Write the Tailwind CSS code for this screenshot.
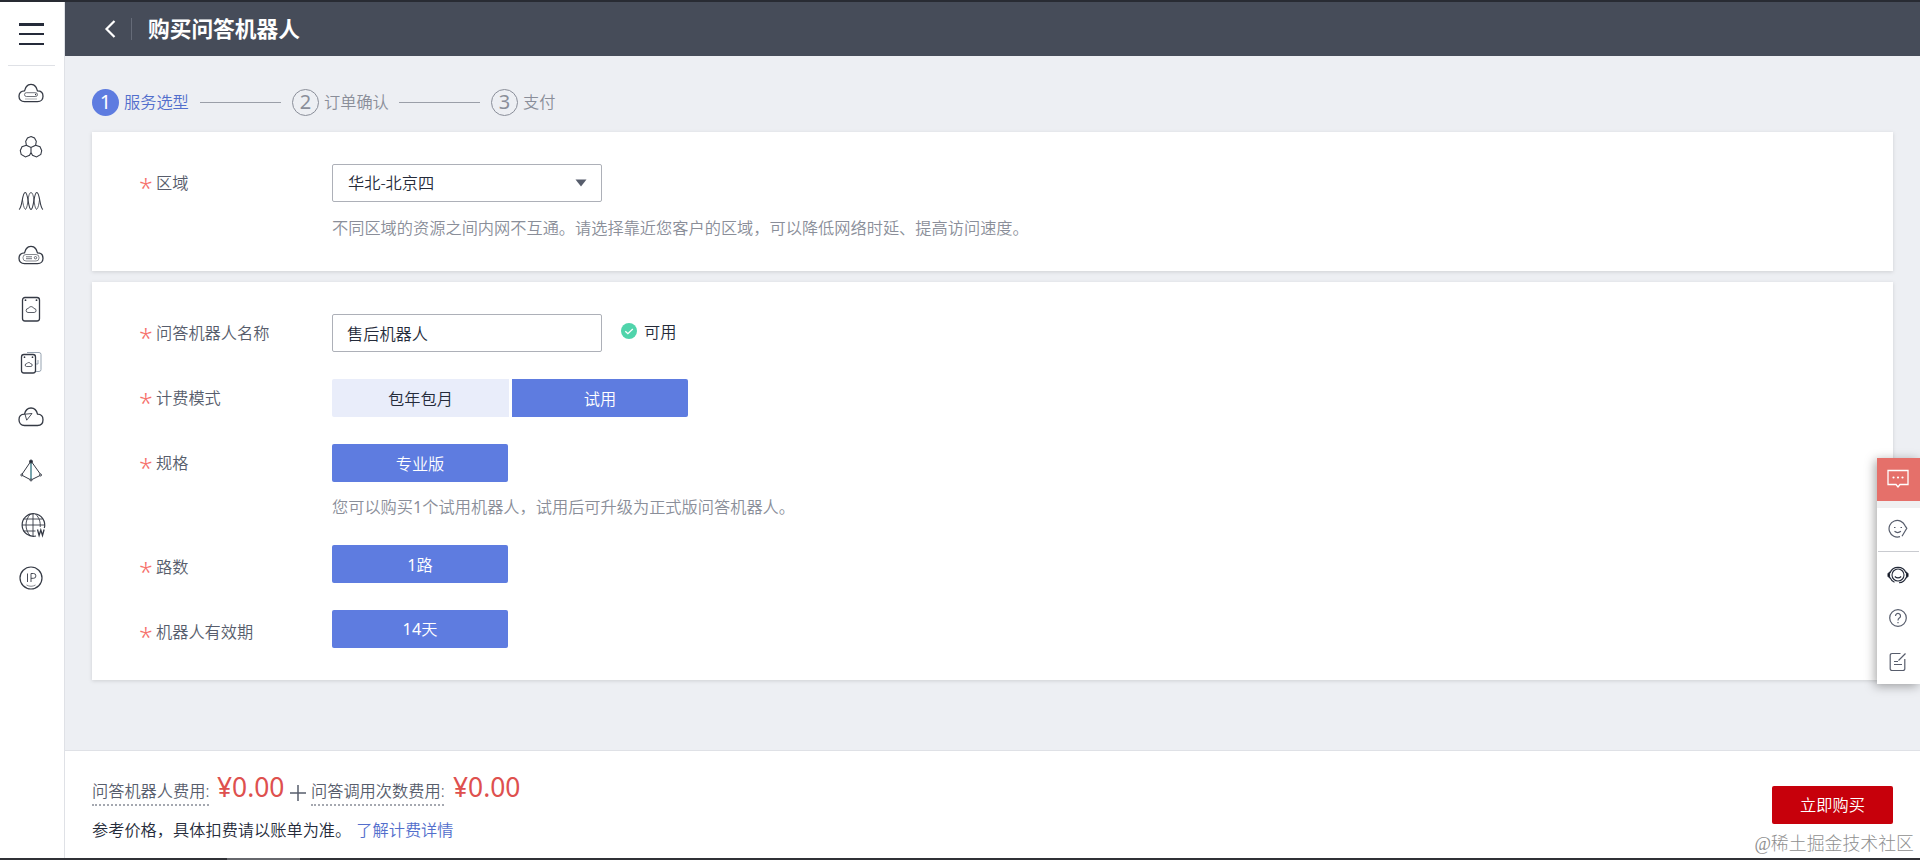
<!DOCTYPE html>
<html lang="zh-CN">
<head>
<meta charset="utf-8">
<title>购买问答机器人</title>
<script src="https://cdn.jsdelivr.net/npm/@tailwindcss/browser@4"></script>
</head>
<body class="relative flex h-[860px] w-[1920px] flex-col overflow-hidden border-t-2 border-[#282b33] bg-[#edeff3] font-['Noto_Sans','Noto_Sans_CJK_SC',sans-serif] text-[16.22px] leading-6 font-[350] text-[#252b3a]">
<div class="flex min-h-0 flex-1">
  <nav class="flex w-[65px] shrink-0 flex-col items-center border-r border-[#dfe1e6] bg-white text-[#353a45]">
    <div class="mr-[2px] flex h-[64px] w-[47px] items-center justify-center border-b border-[#dfe1e6] pt-px">
      <div class="flex h-[22px] w-[25px] flex-col justify-between"><i class="h-[2.5px] bg-[#252b3a]"></i><i class="h-[2.5px] bg-[#252b3a]"></i><i class="h-[2.5px] bg-[#252b3a]"></i></div>
    </div>
    <div class="flex w-[30px] flex-col">
      <div class="flex h-[54px] items-center"><svg width="28" height="28" viewBox="0 0 28 28" fill="none" stroke="currentColor" stroke-width="1.3"><path d="M7.500 22.700C4 22.700 2 20.200 2 17.200C2 13.800 4.300 11.900 7.500 11.900C8.300 10.500 8.200 9 9.500 7.500C11.500 4.700 16.500 4.700 18.500 7.500C19.800 9 19.700 10.500 20.500 11.900C23.700 11.900 26 13.800 26 17.200C26 20.200 24 22.700 20.500 22.700Z"/><rect x="7.500" y="13.700" width="13" height="3.800" rx="1.900" stroke-width=".7"/><path d="M18 15.500h1.200"/><path d="M8 20h12" stroke-width=".4"/></svg></div>
      <div class="flex h-[54px] items-center"><svg width="28" height="28" viewBox="0 0 28 28" fill="none" stroke="currentColor" stroke-width="1.100"><path d="M14 3.500 17.500 5 19.300 8.300 18.600 12.300 14 14.500 9.400 12.300 8.700 8.300 10.500 5Z"/><path d="M9.400 12.300 5 13.800 3.300 17.500 4.200 21.500 8.500 23.900 12.500 22.300 14 19.500V14.500M18.600 12.300 23 13.800 24.700 17.500 23.800 21.500 19.500 23.900 15.500 22.300 14 19.500"/></svg></div>
      <div class="flex h-[54px] items-center"><svg width="28" height="28" viewBox="0 0 28 28" fill="none" stroke="currentColor" stroke-width="1.100"><path d="M2 22.500C5.500 21 5 5.500 8.200 5.500S11 22.500 14 22.500 16.600 5.500 19.800 5.500 22.500 21 26 22.500"/><path d="M14 5.500C10.500 5.500 11.500 20 8.500 22.500C6.500 21 6 16 5.500 13M14 5.500C17.500 5.500 16.500 20 19.500 22.500C21.500 21 22 16 22.500 13" stroke-width=".8"/></svg></div>
      <div class="flex h-[54px] items-center"><svg width="28" height="28" viewBox="0 0 28 28" fill="none" stroke="currentColor" stroke-width="1.300"><path d="M7.500 22.700C4 22.700 2 20.200 2 17.200C2 13.800 4.300 11.900 7.500 11.900C8.300 10.500 8.200 9 9.500 7.500C11.500 4.700 16.500 4.700 18.500 7.500C19.800 9 19.700 10.500 20.500 11.900C23.700 11.900 26 13.800 26 17.200C26 20.200 24 22.700 20.500 22.700Z"/><rect x="6" y="13.500" width="16" height="6.500" rx="3" stroke-width=".6"/><path d="M9 15.800h6M9 17.700h6" stroke-width=".7"/><circle cx="18.500" cy="16.700" r="1.200" stroke-width=".7"/></svg></div>
      <div class="flex h-[54px] items-center"><svg width="28" height="28" viewBox="0 0 28 28" fill="none" stroke="currentColor" stroke-width="1.300"><rect x="5.500" y="2.500" width="17" height="23.500" rx="2.500"/><path d="M8.500 5.200h.01M19.500 5.200h.01" stroke-width="1.800" stroke-linecap="round"/><path d="M11 17.500a2 2 0 0 1 .3-4 3 3 0 0 1 5.600 0 2 2 0 0 1 .3 4Z" stroke-width=".8"/></svg></div>
      <div class="flex h-[54px] items-center"><svg width="28" height="28" viewBox="0 0 28 28" fill="none" stroke="currentColor" stroke-width="1.300"><rect x="4.500" y="5.500" width="14" height="18.500" rx="2.500"/><path d="M7.500 8.200h.01M15.500 8.200h.01" stroke-width="1.700" stroke-linecap="round"/><path d="M9.500 17.500a1.400 1.400 0 0 1 .2-2.800 2.300 2.300 0 0 1 4 0 1.400 1.400 0 0 1 .2 2.800Z" stroke-width=".8"/><path d="M10 3.500h12a2 2 0 0 1 2 2v15a2 2 0 0 1-2 2h-3M21 11v4h-2" stroke="#8b98a8" stroke-width=".9"/></svg></div>
      <div class="flex h-[54px] items-center"><svg width="28" height="28" viewBox="0 0 28 28" fill="none" stroke="currentColor" stroke-width="1.300"><path d="M7.500 22.500C4 22.500 2 20 2 16.800C2 13.500 4.300 11.300 7.500 11.200C8.300 7.500 10.500 5 14 5S19.700 7.500 20.500 11.200C23.700 11.300 26 13.500 26 16.800C26 20 24 22.500 20.500 22.500Z"/><path d="M8 11.200 15 10.500 9.700 17.200Z" stroke-width=".9"/></svg></div>
      <div class="flex h-[54px] items-center"><svg width="28" height="28" viewBox="0 0 28 28" fill="none" stroke="currentColor" stroke-width="1"><path d="M14 4 4.500 18 14 23 24 18Z"/><path d="M14 4v19" stroke="#3f7f8b" stroke-width="1.400"/><circle cx="14" cy="4.500" r="1.500" fill="#252b3a"/><circle cx="4.800" cy="18" r="1" fill="#fff"/><circle cx="23.500" cy="18" r="1" fill="#fff"/><circle cx="14" cy="23" r="1" fill="#fff"/></svg></div>
      <div class="flex h-[54px] items-center pl-[2px]"><svg width="28" height="28" viewBox="0 0 28 28" fill="none" stroke="currentColor" stroke-width="1.200"><path d="M25.300 17A11.300 11.300 0 1 0 17 25"/><path d="M14 2.500V25M3 14h22.500M4.500 8h19M4.500 20h12M11.500 3C5.500 9 5.500 19 11.500 25M16.500 3c4 4 5 8 4.700 13" stroke-width=".9"/><path d="m18.500 18.500 1.600 6 1.700-5.500 1.700 5.500 1.600-6" stroke-width="1.300"/></svg></div>
      <div class="flex h-[54px] items-center"><svg class="mb-[2px]" width="28" height="28" viewBox="0 0 28 28" fill="none" stroke="currentColor" stroke-width="1.200"><circle cx="14" cy="14" r="11"/><path d="M10.500 9.500v8.500M14 18V9.500h2.500a2.400 2.400 0 0 1 0 4.800H14" stroke-width=".9"/><path d="M9.500 21c3 1.700 6 1.700 9 0" stroke-width=".6"/></svg></div>
    </div>
  </nav>
  <div class="flex min-w-0 flex-1 flex-col">
    <header class="flex h-[54px] shrink-0 items-center bg-[#464c59] pl-[38px] text-white">
      <svg width="14" height="18" viewBox="0 0 14 18" fill="none" stroke="currentColor" stroke-width="2.200"><path d="M11.500 1 3.500 9l8 8"/></svg>
      <i class="ml-[14px] h-[22px] w-px bg-[#656b78]"></i>
      <h1 class="ml-[16px] text-[21.7px] leading-8 font-bold">购买问答机器人</h1>
    </header>
    <main class="flex flex-1 flex-col pr-[27px] pl-[27px]">
      <div class="mt-[33px] flex h-[27px] items-center text-[#8a8e99]">
        <span class="flex size-[27px] items-center justify-center rounded-full bg-[#5e7ce0] pb-px text-[20px] font-normal text-white">1</span><span class="mb-[2px] ml-[5px] w-[65px] whitespace-nowrap text-[#526ecc]">服务选型</span>
        <i class="ml-[11px] h-px w-[81px] bg-[#9b9fa8]"></i>
        <span class="ml-[11px] flex size-[27px] items-center justify-center rounded-full border border-[#8a8e99] pb-px text-[20px] font-normal">2</span><span class="mb-[2px] ml-[5px] w-[65px] whitespace-nowrap">订单确认</span>
        <i class="ml-[10px] h-px w-[81px] bg-[#9b9fa8]"></i>
        <span class="ml-[11px] flex size-[27px] items-center justify-center rounded-full border border-[#8a8e99] pb-px text-[20px] font-normal">3</span><span class="mb-[2px] ml-[5px]">支付</span>
      </div>
      <section class="mt-4 h-[139px] bg-white pt-8 pl-[47px] shadow-[0_1px_4px_rgba(0,0,0,0.13)]">
        <div class="flex h-[38px] items-center">
          <label class="flex w-[193px] items-center text-[#575d6c]"><span class="w-[17px] pt-[8px] text-[25px] text-[#f66f6a]">*</span>区域</label>
          <div class="flex h-[38px] w-[270px] items-center justify-between rounded-[2px] border border-[#adb0b8] pr-[14px] pl-[15px]"><span>华北-北京四</span><svg width="12" height="8" viewBox="0 0 12 8"><path d="M.5.500h11L6 7.500Z" fill="#575d6c"/></svg></div>
        </div>
        <p class="mt-[14px] ml-[193px] text-[#8a8e99]">不同区域的资源之间内网不互通。请选择靠近您客户的区域，可以降低网络时延、提高访问速度。</p>
      </section>
      <section class="mt-[11px] h-[398px] bg-white pt-8 pl-[47px] shadow-[0_1px_4px_rgba(0,0,0,0.13)]">
        <div class="flex h-[38px] items-center">
          <label class="flex w-[193px] items-center text-[#575d6c]"><span class="w-[17px] pt-[8px] text-[25px] text-[#f66f6a]">*</span>问答机器人名称</label>
          <div class="flex h-[38px] w-[270px] items-center rounded-[2px] border border-[#adb0b8] pl-[14px]"><span class="pt-px">售后机器人</span></div>
          <svg class="mb-1 ml-[19px]" width="16" height="16" viewBox="0 0 16 16"><circle cx="8" cy="8" r="8" fill="#50d4ab"/><path d="m4.300 8.200 2.600 2.500 4.900-4.700" fill="none" stroke="#fff" stroke-width="1.300"/></svg><span class="mb-[3px] ml-[7px]">可用</span>
        </div>
        <div class="mt-[27px] flex h-[38px] items-center">
          <label class="flex w-[193px] items-center text-[#575d6c]"><span class="w-[17px] pt-[8px] text-[25px] text-[#f66f6a]">*</span>计费模式</label>
          <div class="flex h-[38px] w-[177px] items-center justify-center rounded-l-[2px] bg-[#e9edfa] pt-px">包年包月</div>
          <div class="ml-[3px] flex h-[38px] w-[176px] items-center justify-center rounded-r-[2px] bg-[#5e7ce0] pt-px text-white">试用</div>
        </div>
        <div class="mt-[27px] flex h-[38px] items-center">
          <label class="flex w-[193px] items-center text-[#575d6c]"><span class="w-[17px] pt-[8px] text-[25px] text-[#f66f6a]">*</span>规格</label>
          <div class="flex h-[38px] w-[176px] items-center justify-center rounded-[2px] bg-[#5e7ce0] pt-px text-white">专业版</div>
        </div>
        <p class="mt-[13px] ml-[193px] text-[#8a8e99]">您可以购买<span class="font-normal">1</span>个试用机器人，试用后可升级为正式版问答机器人。</p>
        <div class="mt-[26px] flex h-[38px] items-center">
          <label class="flex w-[193px] items-center pt-[6px] text-[#575d6c]"><span class="w-[17px] pt-[8px] text-[25px] text-[#f66f6a]">*</span>路数</label>
          <div class="flex h-[38px] w-[176px] items-center justify-center rounded-[2px] bg-[#5e7ce0] pt-px text-white"><span class="font-normal">1</span>路</div>
        </div>
        <div class="mt-[27px] flex h-[38px] items-center">
          <label class="flex w-[193px] items-center pt-[5px] text-[#575d6c]"><span class="w-[17px] pt-[8px] text-[25px] text-[#f66f6a]">*</span>机器人有效期</label>
          <div class="flex h-[38px] w-[176px] items-center justify-center rounded-[2px] bg-[#5e7ce0] text-white"><span class="font-normal">14</span>天</div>
        </div>
      </section>
    </main>
    <footer class="flex h-[108px] shrink-0 justify-between border-t border-[#dfe1e6] bg-white pr-[27px] pl-[27px]">
      <div class="pt-[23px]">
        <div class="flex h-[32px] items-end text-[#575d6c]">
          <span class="h-[27px] w-[117px] border-b-2 border-dotted border-[#a5a8b0] leading-[25px] whitespace-nowrap">问答机器人费用:</span>
          <span class="mb-[3px] ml-[8px] w-[73px] text-[26.400px] leading-8 font-normal text-[#de504e]">¥0.00</span>
          <svg class="mb-[5px]" width="16" height="16" viewBox="0 0 16 16" stroke="#575d6c" stroke-width="1.500"><path d="M0 8h16M8 0v16"/></svg>
          <span class="ml-[5px] h-[27px] w-[133px] border-b-2 border-dotted border-[#a5a8b0] leading-[25px] whitespace-nowrap">问答调用次数费用:</span>
          <span class="mb-[3px] ml-[9px] text-[26.400px] leading-8 font-normal text-[#de504e]">¥0.00</span>
        </div>
        <div class="mt-[12px] flex"><span>参考价格，具体扣费请以账单为准。</span><a class="ml-[5px] text-[#526ecc]">了解计费详情</a></div>
      </div>
      <button class="mt-[35px] h-[38px] w-[121px] rounded-[2px] bg-[#c7000b] pb-px text-white">立即购买</button>
    </footer>
  </div>
</div>
<div class="flex h-[2px] bg-[#303136] pl-[227px]"><i class="w-[73px] bg-[#66676c]"></i></div>
<aside class="absolute top-[456px] right-0 w-[43px] bg-white text-[#575d6c] shadow-[-2px_2px_10px_rgba(0,0,0,0.35)]">
  <div class="flex h-[43px] items-center justify-center bg-[#e5706a] pr-px pb-px"><svg width="22" height="20" viewBox="0 0 22 20" fill="none" stroke="#fff" stroke-width="1.300"><path d="M1 1.500h20v14h-8l-2 2.500-2-2.500H1Z"/><path d="M6.500 8.500h.01M11 8.500h.01M15.500 8.500h.01" stroke-width="2.200" stroke-linecap="round"/></svg></div>
  <div class="h-[7px] bg-[#f0f0f1]"></div>
  <div class="flex h-[43px] items-center justify-center pr-px pb-px"><svg width="20" height="20" viewBox="0 0 20 20" fill="none" stroke="currentColor" stroke-width="1.200"><path d="M12 17.600A8.300 8.300 0 1 1 17 6.500M16.800 6.300 18.800 9.300 14 17.300M6 8.500h1.500M12.500 8.500H14M6.500 12.300q3.200 2.600 6.400 0"/></svg></div>
  <div class="mx-[1px] h-px bg-[#c9cbd0]"></div>
  <div class="flex h-[46px] items-center justify-center pr-px pb-px"><svg width="22" height="20" viewBox="0 0 22 20" fill="none" stroke="#252b3a" stroke-width="1.100"><circle cx="11" cy="10" r="6"/><path d="M3 8a8.500 8.500 0 0 1 16 0M19 12.500c-1 3-3.500 5-7 5.300M3 12.500c1 2.500 2.500 4 4.500 4.800"/><path d="M2.500 7.500v5L1 11.200V8.800ZM19.500 7.500v5l1.500-1.300V8.800Z" fill="#000"/><path d="M7.800 11.500q3.200 2.800 6.400 0"/></svg></div>
  <div class="flex h-[41px] items-center justify-center pr-px pb-px"><svg width="20" height="20" viewBox="0 0 20 20" fill="none" stroke="currentColor" stroke-width="1.200"><circle cx="10" cy="10" r="8.300"/><path d="M7.500 8a2.500 2.500 0 1 1 3.800 2.100c-1 .7-1.300 1.100-1.300 2.400M10 14v1.300"/></svg></div>
  <div class="flex h-[45px] items-center justify-center pr-px"><svg width="20" height="20" viewBox="0 0 20 20" fill="none" stroke="currentColor" stroke-width="1.200"><path d="M12.500 1.500H4A1.800 1.800 0 0 0 2.200 3.300v13.400A1.800 1.800 0 0 0 4 18.500h11a1.800 1.800 0 0 0 1.800-1.800V7M17.500 1.500 10.500 8.500M6 9.500h4M6 12.500h8"/></svg></div>
</aside>
<div class="absolute right-[6px] bottom-[4px] font-['Liberation_Serif','Noto_Sans_CJK_SC',serif] text-[17.900px] leading-6 font-light whitespace-nowrap text-[#8f8f8f]">@稀土掘金技术社区</div>
</body>
</html>
